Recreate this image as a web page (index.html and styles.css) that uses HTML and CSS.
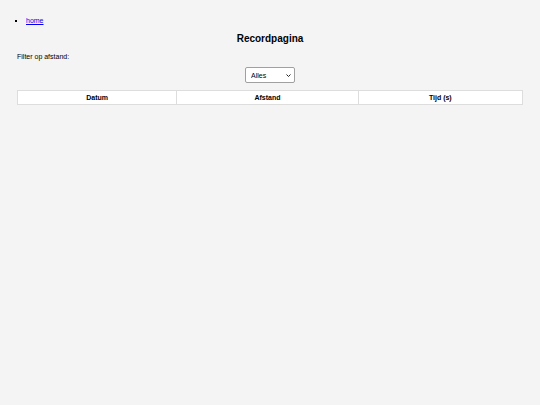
FILE: index.html
```html
<!DOCTYPE html>
<html lang="nl">
<head>
<meta charset="utf-8">
<title>Recordpagina</title>
<link rel="stylesheet" href="styles.css">
</head>
<body>
<nav class="nav">
  <ul class="nav-list">
    <li><a href="#">home</a></li>
  </ul>
</nav>
<h1 class="title">Recordpagina</h1>
<label class="filter-label" for="afstand">Filter op afstand:</label>
<div class="filter-row">
  <div class="select-wrap">
    <select id="afstand" class="filter-select">
      <option>Alles</option>
    </select>
    <svg class="select-arrow" width="5" height="3" viewBox="0 0 5 3" aria-hidden="true"><path d="M0.5 0.5 L2.5 2.5 L4.5 0.5" fill="none" stroke="#222" stroke-width="1"/></svg>
  </div>
</div>
<table class="records">
  <thead>
    <tr>
      <th class="col-datum">Datum</th>
      <th class="col-afstand">Afstand</th>
      <th class="col-tijd">Tijd (s)</th>
    </tr>
  </thead>
  <tbody></tbody>
</table>
</body>
</html>
```
FILE: styles.css
```css
html, body {
  background: #f4f4f4;
}
body {
  margin: 0;
  padding: 15px 17px;
  font-family: "Liberation Sans", Arial, sans-serif;
  font-size: 7px;
  color: #000;
}
.nav-list {
  margin: 0;
  padding-left: 9px;
  list-style: square;
  line-height: 12px;
}
.nav-list a {
  color: #0000ee;
}
.title {
  text-align: center;
  font-size: 10px;
  font-weight: bold;
  margin: 5px 0 6px;
  line-height: 14px;
}
.filter-label {
  display: block;
  line-height: 10px;
}
.filter-row {
  display: flex;
  justify-content: center;
  margin-top: 5px;
}
.select-wrap {
  position: relative;
  width: 50px;
  height: 16px;
}
.filter-select {
  appearance: none;
  -webkit-appearance: none;
  width: 50px;
  height: 16px;
  margin: 0;
  font-family: "Liberation Sans", Arial, sans-serif;
  font-size: 7px;
  color: #000;
  background: #fff;
  border: 1px solid #a0a0a0;
  border-radius: 2px;
  padding: 0 10px 0 5px;
}
.select-arrow {
  position: absolute;
  right: 4px;
  top: 7px;
  pointer-events: none;
}
.records {
  width: 100%;
  border-collapse: collapse;
  background: #fff;
  margin-top: 7px;
}
.records th {
  border: 1px solid #dddddd;
  padding: 3px 4px 2px;
  height: 8px;
  line-height: 8px;
  font-size: 7px;
  font-weight: bold;
}
.col-datum { width: 159px; }
.col-afstand { width: 182px; }
.col-tijd { width: 165px; }
```
